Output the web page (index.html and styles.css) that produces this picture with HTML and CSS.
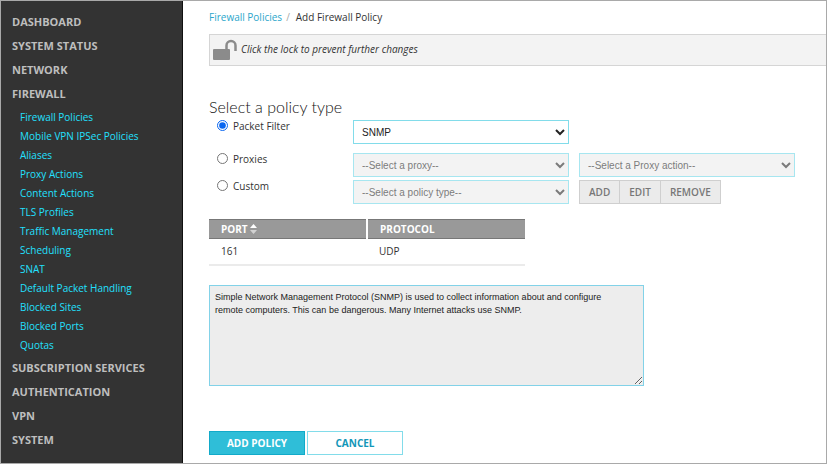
FILE: index.html
```html
<!DOCTYPE html>
<html lang="en">
<head>
<meta charset="utf-8">
<title>Add Firewall Policy</title>
<link rel="stylesheet" href="styles.css">
</head>
<body>
<div class="app">
  <nav class="sidebar">
    <a class="section" href="#">DASHBOARD</a>
    <a class="section" href="#">SYSTEM STATUS</a>
    <a class="section" href="#">NETWORK</a>
    <a class="section" href="#">FIREWALL</a>
    <ul class="submenu">
      <li><a href="#">Firewall Policies</a></li>
      <li><a href="#">Mobile VPN IPSec Policies</a></li>
      <li><a href="#">Aliases</a></li>
      <li><a href="#">Proxy Actions</a></li>
      <li><a href="#">Content Actions</a></li>
      <li><a href="#">TLS Profiles</a></li>
      <li><a href="#">Traffic Management</a></li>
      <li><a href="#">Scheduling</a></li>
      <li><a href="#">SNAT</a></li>
      <li><a href="#">Default Packet Handling</a></li>
      <li><a href="#">Blocked Sites</a></li>
      <li><a href="#">Blocked Ports</a></li>
      <li><a href="#">Quotas</a></li>
    </ul>
    <a class="section" href="#">SUBSCRIPTION SERVICES</a>
    <a class="section" href="#">AUTHENTICATION</a>
    <a class="section" href="#">VPN</a>
    <a class="section" href="#">SYSTEM</a>
  </nav>
  <main class="content">
    <div class="breadcrumb"><a href="#">Firewall Policies</a><span class="slash">/</span><span>Add Firewall Policy</span></div>
    <button class="lockbar" type="button">
      <svg width="24" height="22" viewBox="0 0 24 22" aria-hidden="true"><rect x="0" y="10" width="17" height="11" rx="1" fill="#8b8b8b"/><path d="M13.500 10V6.500a4.500 4.500 0 0 1 9 0V12" fill="none" stroke="#8b8b8b" stroke-width="2.500"/></svg>
      <em>Click the lock to prevent further changes</em>
    </button>
    <h1>Select a policy type</h1>
    <form>
      <div class="row first">
        <label class="choice"><input type="radio" name="type" checked><span>Packet Filter</span></label>
        <select aria-label="Packet filter"><option>SNMP</option></select>
      </div>
      <div class="row">
        <label class="choice"><input type="radio" name="type"><span>Proxies</span></label>
        <select aria-label="Proxy" disabled><option>--Select a proxy--</option></select>
        <select aria-label="Proxy action" disabled><option>--Select a Proxy action--</option></select>
      </div>
      <div class="row">
        <label class="choice"><input type="radio" name="type"><span>Custom</span></label>
        <select aria-label="Custom policy type" disabled><option>--Select a policy type--</option></select>
        <div class="group"><button type="button" disabled>ADD</button><button type="button" disabled>EDIT</button><button type="button" disabled>REMOVE</button></div>
      </div>
      <table>
        <thead><tr><th>PORT <svg width="7" height="10" viewBox="0 0 7 10" aria-hidden="true"><path d="M0 4L3.500 0L7 4Z" fill="#fff"/><path d="M0 6H7L3.500 10Z" fill="#d2d2d2"/></svg></th><th>PROTOCOL</th></tr></thead>
        <tbody><tr><td>161</td><td>UDP</td></tr></tbody>
      </table>
      <textarea aria-label="Description" readonly>Simple Network Management Protocol (SNMP) is used to collect information about and configure remote computers. This can be dangerous. Many Internet attacks use SNMP.</textarea>
      <div class="actions">
        <button class="primary" type="submit">ADD POLICY</button>
        <button class="secondary" type="button">CANCEL</button>
      </div>
    </form>
  </main>
</div>
</body>
</html>
```
FILE: styles.css
```css
* {
  box-sizing: border-box;
}

body {
  margin: 0;
  background: #fff;
  color: #333;
  font: 10px/16px "Open Sans", sans-serif;
}

a {
  color: inherit;
  text-decoration: none;
}

.app {
  display: flex;
  min-height: 100vh;
  border: 1px solid #a9a9a9;
}

.sidebar {
  flex: 0 0 182px;
  padding: 9px 0 8px 11px;
  background: #333;
  border-right: 1px solid #111;
}

.section {
  display: block;
  color: #bebebe;
  font-size: 11px;
  font-weight: 700;
  line-height: 24px;
}

.submenu {
  list-style: none;
  margin: 0;
  padding: 2px 0 1px 8px;
  color: #22e0ff;
  line-height: 19px;
}

.content {
  flex: 1;
  min-width: 0;
  padding: 8px 0 6px 26px;
}

.breadcrumb {
  display: flex;
  gap: 4px;
}

.breadcrumb a {
  color: #2ba6cb;
}

.slash {
  color: #aaa;
  margin-right: 2px;
}

.lockbar {
  display: flex;
  gap: 4px;
  width: 100%;
  height: 32px;
  margin: 9px 0 0;
  padding: 4px 3px;
  border: 1px solid #d5d5d5;
  border-right: 0;
  background: #f3f3f3;
  color: #333;
  font: 10px/20px "Open Sans", sans-serif;
  text-align: left;
}

h1 {
  margin: 31px 0 0;
  color: #111;
  font: 300 16px/20px Lato, sans-serif;
}

.row {
  display: flex;
  align-items: flex-start;
  gap: 10px;
  margin-bottom: 3px;
}

.row.first {
  margin: 3px 0 9px;
}

.choice {
  display: flex;
  align-items: flex-start;
  gap: 5px;
  width: 134px;
  padding-left: 8px;
  line-height: 12px;
}

.choice input {
  width: 11px;
  height: 11px;
  margin: 0;
  accent-color: #0a66f0;
}

select {
  width: 216px;
  height: 24px;
  padding: 0 4px;
  border: 1px solid #82dcea;
  border-radius: 0;
  background: #fff;
  color: #222;
  font: 10px "Liberation Sans", sans-serif;
}

select:disabled {
  background: #efefef;
  color: #444;
}

.group {
  display: flex;
}

.group button {
  height: 24px;
  margin-right: -1px;
  padding: 0 9px;
  border: 1px solid #cfcfcf;
  background: #ebebeb;
  color: #777;
  font: 600 10px "Open Sans", sans-serif;
}

table {
  width: 316px;
  margin-top: 15px;
  border-collapse: collapse;
  table-layout: fixed;
  text-align: left;
}

th {
  height: 19px;
  padding: 0 12px;
  background: #999;
  border: 1px solid #777;
  border-width: 1px 0;
  color: #fff;
  font-size: 10px;
  font-weight: 700;
}

th + th {
  border-left: 2px solid #fff;
}

th svg {
  vertical-align: -1px;
}

td {
  height: 26px;
  padding: 0 12px;
  border-bottom: 2px solid #ebebeb;
}

textarea {
  display: block;
  width: 435px;
  height: 101px;
  margin-top: 19px;
  padding: 5px 16px 5px 5px;
  border: 1px solid #82d2e8;
  background: #ededed;
  color: #222;
  font: 9px/13px "Liberation Sans", sans-serif;
}

.actions {
  display: flex;
  gap: 2px;
  margin-top: 45px;
}

.actions button {
  width: 96px;
  height: 24px;
  padding: 0;
  border: 1px solid #82dcea;
  background: #fff;
  color: #1296b8;
  font: 700 10px "Open Sans", sans-serif;
}

.actions .primary {
  border-color: #12aac9;
  background: #2fbed8;
  color: #fff;
}
```
